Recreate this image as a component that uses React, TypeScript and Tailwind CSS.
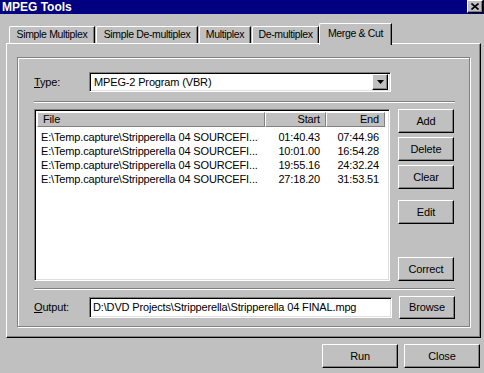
import React from 'react';

const ROWS = [
  { file: 'E:\\Temp.capture\\Stripperella 04 SOURCEFI...', start: '01:40.43', end: '07:44.96' },
  { file: 'E:\\Temp.capture\\Stripperella 04 SOURCEFI...', start: '10:01.00', end: '16:54.28' },
  { file: 'E:\\Temp.capture\\Stripperella 04 SOURCEFI...', start: '19:55.16', end: '24:32.24' },
  { file: 'E:\\Temp.capture\\Stripperella 04 SOURCEFI...', start: '27:18.20', end: '31:53.51' },
];

const raised =
  'bg-[#c0c0c0] border-t border-l border-t-white border-l-white border-r border-b border-r-black border-b-black shadow-[inset_-1px_-1px_0_#808080]';
const sunken =
  'border-t border-l border-t-[#808080] border-l-[#808080] border-r border-b border-r-white border-b-white shadow-[inset_1px_1px_0_#000,inset_-1px_-1px_0_#dfdfdf]';

function Button({ label, className = '' }: { label: string; className?: string }) {
  return (
    <div className={`${raised} flex items-center justify-center text-black ${className}`}>{label}</div>
  );
}

function Separator({ className = '' }: { className?: string }) {
  return <div className={`h-[2px] border-t border-t-[#808080] border-b border-b-white ${className}`} />;
}

const TABS = [
  { label: 'Simple Multiplex', cls: 'ml-[9px] w-[86px]' },
  { label: 'Simple De-multiplex', cls: 'ml-[1px] w-[102px]' },
  { label: 'Multiplex', cls: 'ml-[1px] w-[52px]' },
  { label: 'De-multiplex', cls: 'ml-[1px] w-[67px]' },
];

export default function App() {
  return (
    <div className="w-[484px] h-[373px] bg-[#c0c0c0] overflow-hidden flex flex-col font-['Liberation_Sans',Arial,sans-serif] text-[11px] tracking-[-0.15px] leading-none text-black select-none">
      {/* title bar */}
      <div className="h-[14px] bg-[#000080] flex items-start justify-between">
        <span className="pl-[2px] pt-[1px] text-white font-bold text-[12px] tracking-normal">MPEG Tools</span>
        <div className={`${raised} w-[16px] h-[13px] mr-[1px] flex items-center justify-center`}>
          <svg width="8" height="7" viewBox="0 0 8 7">
            <path d="M0.5 0.5 L7.5 6.5 M7.5 0.5 L0.5 6.5" stroke="#000" strokeWidth="1.6" />
          </svg>
        </div>
      </div>

      {/* tabs */}
      <div className="mt-[9px] h-[20px] flex items-end relative z-10 text-[10.5px] tracking-[-0.35px]">
        {TABS.map(t => (
          <div
            key={t.label}
            className={`${t.cls} h-[17px] border-t border-l border-white border-r border-r-black shadow-[inset_-1px_0_0_#808080] rounded-tl-[2px] flex items-center justify-center pb-[1px] whitespace-nowrap`}
          >
            {t.label}
          </div>
        ))}
        <div className="w-[73px] h-[22px] -mb-[2px] bg-[#c0c0c0] border-t border-l border-white border-r border-r-black shadow-[inset_-1px_0_0_#808080] rounded-tl-[2px] flex items-center justify-center pb-[3px] whitespace-nowrap">
          Merge &amp; Cut
        </div>
      </div>

      {/* page */}
      <div className="ml-[6px] w-[475px] h-[295px] border-t border-l border-white border-r border-b border-r-black border-b-black shadow-[inset_-1px_-1px_0_#808080] pl-[10px] pt-[13px]">
        <div className="w-[453px] h-[270px] border border-[#808080] shadow-[inset_1px_1px_0_#fff,1px_1px_0_#fff] pl-[16px] pt-[14px]">
          {/* type row */}
          <div className="flex items-center h-[20px]">
            <span className="w-[55px]">
              <u>T</u>ype:
            </span>
            <div className={`${sunken} bg-white w-[302px] h-[20px] flex items-center justify-between pl-[4px] pr-[2px]`}>
              <span>MPEG-2 Program (VBR)</span>
              <div className={`${raised} w-[16px] h-[16px] flex items-center justify-center`}>
                <svg width="7" height="4" viewBox="0 0 7 4">
                  <path d="M0 0 H7 L3.5 4 Z" fill="#000" />
                </svg>
              </div>
            </div>
          </div>

          <Separator className="mt-[9px] w-[421px]" />

          {/* list and buttons */}
          <div className="mt-[6px] flex h-[172px]">
            <div className={`${sunken} bg-white w-[356px] h-[172px] p-[2px] flex flex-col`}>
              <div className="flex h-[15px]">
                <div className="w-[228px] border-t border-l border-white border-r border-b border-r-[#808080] border-b-[#808080] bg-[#c0c0c0] flex items-center pl-[5px]">
                  File
                </div>
                <div className="w-[61px] border-t border-l border-white border-r border-b border-r-[#808080] border-b-[#808080] bg-[#c0c0c0] flex items-center justify-end pr-[5px]">
                  Start
                </div>
                <div className="w-[59px] border-t border-l border-white border-r border-b border-r-[#808080] border-b-[#808080] bg-[#c0c0c0] flex items-center justify-end pr-[5px]">
                  End
                </div>
              </div>
              <div className="pt-[3px]">
                {ROWS.map((r, i) => (
                  <div key={i} className="flex h-[14px] items-center">
                    <span className="w-[228px] pl-[4px] whitespace-nowrap overflow-hidden">{r.file}</span>
                    <span className="w-[61px] text-right pr-[6px]">{r.start}</span>
                    <span className="w-[59px] text-right pr-[6px]">{r.end}</span>
                  </div>
                ))}
              </div>
            </div>
            <div className="ml-[8px] w-[56px] flex flex-col">
              <Button label="Add" className="h-[24px]" />
              <Button label="Delete" className="h-[24px] mt-[4px]" />
              <Button label="Clear" className="h-[24px] mt-[4px]" />
              <Button label="Edit" className="h-[24px] mt-[11px]" />
              <Button label="Correct" className="h-[24px] mt-auto" />
            </div>
          </div>

          <Separator className="mt-[7px] w-[421px]" />

          {/* output row */}
          <div className="mt-[5px] flex items-center h-[24px]">
            <span className="w-[55px]">
              <u>O</u>utput:
            </span>
            <div className={`${sunken} bg-white w-[303px] h-[21px] flex items-center pl-[3px]`}>
              <span className="whitespace-nowrap">D:\DVD Projects\Stripperella\Stripperella 04 FINAL.mpg</span>
            </div>
            <Button label="Browse" className="ml-[7px] w-[56px] h-[23px]" />
          </div>
        </div>
      </div>

      {/* bottom buttons */}
      <div className="mt-[6px] flex justify-end pr-[4px] gap-[6px]">
        <Button label="Run" className="w-[76px] h-[24px]" />
        <Button label="Close" className="w-[76px] h-[24px]" />
      </div>
    </div>
  );
}
